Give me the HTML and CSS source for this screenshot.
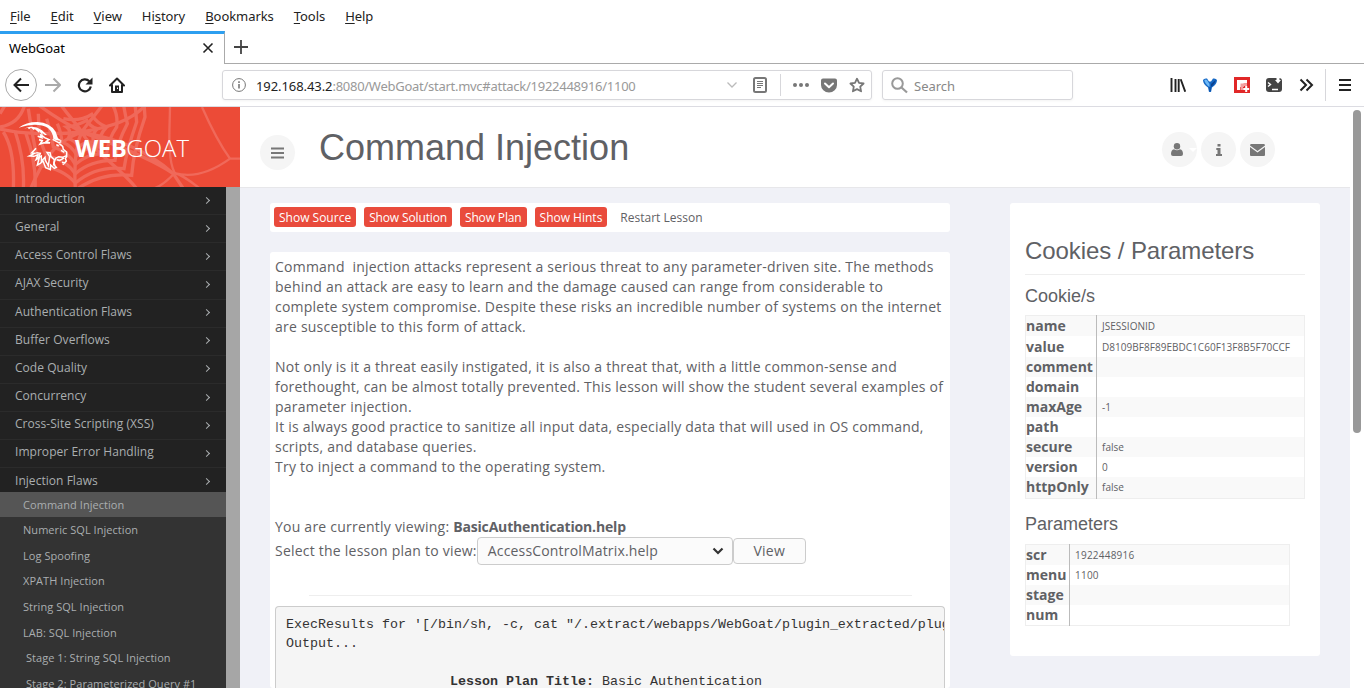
FILE: index.html
```html
<!DOCTYPE html>
<html lang="en">
<head>
    <meta charset="UTF-8">
    <title>WebGoat</title>
    <link rel="stylesheet" href="styles.css">
</head>
<body>
    <div class="browser">
        <div class="menubar">
            <span><u>F</u>ile</span>
            <span><u>E</u>dit</span>
            <span><u>V</u>iew</span>
            <span>Hi<u>s</u>tory</span>
            <span><u>B</u>ookmarks</span>
            <span><u>T</u>ools</span>
            <span><u>H</u>elp</span>
        </div>
        <div class="tabs">
            <div class="tab">
                <span>WebGoat</span>
                <svg width="12" height="12" viewBox="0 0 12 12"><path d="M1.500 1.500l9 9M10.500 1.500l-9 9" stroke="#222" stroke-width="1.600" fill="none"/></svg>
            </div>
            <div class="tab-rest">
                <svg width="14" height="14" viewBox="0 0 14 14"><path d="M7 0v14M0 7h14" stroke="#444" stroke-width="1.800"/></svg>
            </div>
        </div>
        <div class="navbar">
            <div class="back">
                <svg width="16" height="16" viewBox="0 0 16 16"><path d="M8 1.500L1.500 8 8 14.500M2 8h14" stroke="#222" stroke-width="2" fill="none"/></svg>
            </div>
            <div class="nav-icons">
                <svg width="16" height="16" viewBox="0 0 16 16"><path d="M8.500 1.500L15 8l-6.500 6.500M0 8h15" stroke="#aaa" stroke-width="2" fill="none"/></svg>
                <svg width="16" height="16" viewBox="0 0 16 16"><path d="M13.800 9.500A6 6 0 1 1 12.300 4.200" stroke="#222" stroke-width="2.200" fill="none"/><path d="M15.500 0.500v7h-7z" fill="#222"/></svg>
                <svg width="16" height="16" viewBox="0 0 16 16"><path d="M1 8.500L8 1.500l7 7M3 7.500V15h10V7.500" stroke="#222" stroke-width="2" fill="none" stroke-linejoin="round" stroke-linecap="round"/><path d="M6 8.500h4V15H6z" fill="#222"/><path d="M8 10.500h1v1.500H8z" fill="#fff"/></svg>
            </div>
            <div class="urlbar">
                <svg width="14" height="14" viewBox="0 0 14 14"><circle cx="7" cy="7" r="6.400" fill="none" stroke="#777"/><path d="M7 6v4.500M7 3.300v1.700" stroke="#777" stroke-width="1.600"/></svg>
                <span class="url"><b>192.168.43.2</b>:8080/WebGoat/start.mvc#attack/1922448916/1100</span>
                <svg class="drop" width="10" height="6" viewBox="0 0 10 6"><path d="M.5.5L5 5 9.500.5" stroke="#bbb" stroke-width="1.300" fill="none"/></svg>
                <svg class="reader" width="14" height="16" viewBox="0 0 14 16"><rect x="1" y="1" width="12" height="14" rx="1.500" fill="none" stroke="#777" stroke-width="2"/><path d="M4 4.500h6M4 6.500h6M4 8.500h6M4 10.500h4" stroke="#777"/></svg>
                <i class="sep"></i>
                <svg class="dots" width="16" height="4" viewBox="0 0 16 4"><g fill="#777"><circle cx="2" cy="2" r="2"/><circle cx="8" cy="2" r="2"/><circle cx="14" cy="2" r="2"/></g></svg>
                <svg class="pocket" width="16" height="15" viewBox="0 0 16 15"><path d="M2 .5h12A2 2 0 0 1 16 2.500V7A8 7.500 0 0 1 0 7V2.500A2 2 0 0 1 2 .5z" fill="#777"/><path d="M4 5.500l4 3.700 4-3.700" stroke="#fff" stroke-width="2" fill="none" stroke-linecap="round" stroke-linejoin="round"/></svg>
                <svg width="16" height="16" viewBox="0 0 16 16"><path d="M8 1.700l2 4.200 4.600.6-3.400 3.200.9 4.600L8 12.100l-4.100 2.200.9-4.600L1.400 6.500 6 5.900z" fill="none" stroke="#777" stroke-width="1.800" stroke-linejoin="round"/></svg>
            </div>
            <div class="search">
                <svg width="17" height="17" viewBox="0 0 17 17"><circle cx="6.500" cy="6.500" r="5.300" fill="none" stroke="#999" stroke-width="2"/><path d="M10.500 10.500l5.500 5" stroke="#999" stroke-width="2.200"/></svg>
                <span>Search</span>
            </div>
            <div class="tools">
                <svg width="16" height="16" viewBox="0 0 16 16"><path d="M1.500 1v14M5.500 2v13M8.700 2v13M10.700 2.200l4.500 12.500" stroke="#222" stroke-width="1.900"/></svg>
                <svg width="16" height="16" viewBox="0 0 16 16"><path d="M1 3q1-2 4-1.500l2 3h2l2-3q3-.5 4 1.500 0 4-5 7.500L9 15H7l-1-4.500Q1 7 1 3z" fill="#1668c4"/><path d="M2.300 3q1.500-1 2.700 0L7.500 7v3Q3 7 2.300 3z" fill="#6db9f8"/><path d="M13.700 3L9 7v3q4-3 4.700-7zM7.500 10h1v4h-1z" fill="#0b4290"/></svg>
                <svg width="16" height="16" viewBox="0 0 16 16"><path d="M0 0h16v16H0z" fill="#e12828"/><path d="M3 3h10v3.500H9.500V10H6v3H3z" fill="#fff"/><path d="M6.500 6.500H13V9H9.500v1H9v3H6.500z" fill="#f3a0a0"/><path d="M12.200 9v6M9.200 12h6" stroke="#fff" stroke-width="2"/></svg>
                <svg width="16" height="16" viewBox="0 0 16 16"><path d="M3 1h10a3 3 0 0 1 3 3v8a3 3 0 0 1-3 3H3a3 3 0 0 1-3-3V4a3 3 0 0 1 3-3z" fill="#444"/><path d="M2 5.500l2.500 2L2 9.500M6 12.500h6" stroke="#fff" stroke-width="1.400" fill="none"/><path d="M10.500 0h3v3H15l-3 3.500L9 3h1.500z" fill="#fff"/></svg>
                <svg width="16" height="16" viewBox="0 0 16 16"><path d="M2.500 2.500L8 8l-5.500 5.500M8.500 2.500L14 8l-5.500 5.500" stroke="#222" stroke-width="2" fill="none"/></svg>
                <i class="sep"></i>
                <svg width="12" height="16" viewBox="0 0 12 16"><path d="M0 3h12M0 8h12M0 13h12" stroke="#222" stroke-width="2"/></svg>
            </div>
        </div>
    </div>

    <div class="page">
        <aside class="sidebar">
            <div class="brand">
                <svg class="web" width="240" height="80" viewBox="0 0 720 240" fill="none">
                    <!-- cobweb -->
                    <g stroke="#f0695a" stroke-width="10">
                        <path d="M245 75C180 40 150 20 110-10M245 75C160 85 60 80 0 66M245 75C150 110 120 180 92 245M245 75C225 120 222 180 226 245M245 75C275 130 360 180 410 245M245 75C310 100 450 150 520 200L550 245M245 75C330 60 400 40 440-10M245 75C230 50 200 20 180-10M245 75C270 40 290 20 310-10M245 75C340 95 430 120 520 200"/>
                        <path d="M510-5C510 60 500 150 524 198Q600 220 690 155M606 0Q650 100 690 155H725M524 198Q490 235 460 245M524 198Q550 205 600 245" stroke-width="7"/>
                        <path d="M200 60Q215 70 205 95Q225 100 235 120Q255 102 280 105Q275 82 292 65Q270 60 260 40Q235 55 200 60z"/>
                        <path d="M172 50Q185 80 185 105Q215 115 230 145Q255 120 295 120Q295 85 320 60Q290 50 275 22Q240 45 190 35"/>
                        <path d="M140 35Q155 85 160 120Q205 135 226 172Q265 137 320 140Q325 95 350 60Q355 20 335-10"/>
                        <path d="M115 20Q115 95 138 145Q200 160 226 200Q270 160 345 160Q350 110 382 50Q375 20 370-10"/>
                        <path d="M85 5Q100 110 118 175Q190 185 226 228Q290 175 372 185Q380 130 410 45L405-10"/>
                        <path d="M45 72Q75 160 70 245M10 75Q45 130 40 245M78 80Q110 170 105 245M0 60Q60 50 75-10M0 20L15-5M226 250Q300 195 395 205Q400 130 435 30L432-10"/>
                    </g>
                    <!-- goat head -->
                    <g fill="#fff">
                        <path d="M56 62Q78 45 112 45Q150 47 167 74Q171 86 174 94L186 101Q170 103 160 96Q160 78 144 63Q112 44 56 62z"/>
                        <path d="M72 65Q100 52 126 70L141 84 135 84 127 78 128 85 117 72 118 78 104 66 102 70 93 62 87 67 83 62z"/>
                    </g>
                    <g stroke="#fff" stroke-width="4.500" stroke-linejoin="miter">
                        <path d="M113 88L126 92 121 82 134 92 147 98 139 103 150 108 132 107 120 111 127 101 117 98"/>
                        <path d="M158 97L176 107 184 104M178 110L188 118 190 127 200 135 200 149 196 154 199 162 194 168 186 166M183 130L193 136M169 113L176 117M199 146L188 151 176 149 167 154 162 168 165 176M192 153L179 160 170 158M196 166L188 173"/>
                        <path d="M108 124L95 138 104 139 88 147 102 148 114 143 108 158 118 152 112 174 121 169 129 162 137 182 151 188 152 174 163 184 169 181 161 173 163 158 153 149 150 137 141 136 149 149 145 176 136 160 135 151 124 163 124 147 116 151 121 139 109 137"/>
                    </g>
                </svg>
                <div class="logo"><b>WEB</b>GOAT</div>
            </div>
            <div class="side-body">
                <ul class="menu">
                    <li>Introduction<i></i></li>
                    <li>General<i></i></li>
                    <li>Access Control Flaws<i></i></li>
                    <li>AJAX Security<i></i></li>
                    <li>Authentication Flaws<i></i></li>
                    <li>Buffer Overflows<i></i></li>
                    <li>Code Quality<i></i></li>
                    <li>Concurrency<i></i></li>
                    <li>Cross-Site Scripting (XSS)<i></i></li>
                    <li>Improper Error Handling<i></i></li>
                    <li class="open">Injection Flaws<i></i></li>
                </ul>
                <ul class="submenu">
                    <li class="active">Command Injection</li>
                    <li>Numeric SQL Injection</li>
                    <li>Log Spoofing</li>
                    <li>XPATH Injection</li>
                    <li>String SQL Injection</li>
                    <li>LAB: SQL Injection</li>
                    <li class="stage">Stage 1: String SQL Injection</li>
                    <li class="stage">Stage 2: Parameterized Query #1</li>
                </ul>
            </div>
        </aside>

        <main class="main">
            <header class="header">
                <div class="circle toggle">
                    <svg width="13" height="12" viewBox="0 0 13 12"><path d="M0 1.500h13M0 6h13M0 10.500h13" stroke="#777" stroke-width="2"/></svg>
                </div>
                <h1>Command Injection</h1>
                <div class="actions">
                    <div class="circle user">
                        <svg width="12" height="13" viewBox="0 0 12 13"><path d="M3 6.200Q6 8.500 9 6.200 12 7 12 11 12 13 10 13H2Q0 13 0 11 0 7 3 6.200z" fill="#777"/><circle cx="6" cy="3.300" r="3.200" fill="#777"/></svg>
                        <em></em>
                    </div>
                    <div class="circle">
                        <svg width="6" height="12" viewBox="0 0 6 12"><path d="M1.500 0h3v2.500h-3zM.3 4h4.200v6H6v2H0v-2h1.500V6H.3z" fill="#777"/></svg>
                    </div>
                    <div class="circle">
                        <svg width="15" height="12" viewBox="0 0 15 12"><path d="M1 0h13q1 0 1 1.500L7.500 7 0 1.500Q0 0 1 0zM0 3l7.500 5.500L15 3v8q0 1-1 1H1q-1 0-1-1z" fill="#777"/></svg>
                    </div>
                </div>
            </header>

            <div class="content">
                <section class="lesson">
                    <div class="panel buttons">
                        <a class="btn">Show Source</a>
                        <a class="btn tight">Show Solution</a>
                        <a class="btn tight">Show Plan</a>
                        <a class="btn">Show Hints</a>
                        <a class="restart">Restart Lesson</a>
                    </div>
                    <div class="panel lesson-text">
                        <p>Command&nbsp; injection attacks represent a serious threat to any parameter-driven site. The methods<br>behind an attack are easy to learn and the damage caused can range from considerable to<br>complete system compromise. Despite these risks an incredible number of systems on the internet<br>are susceptible to this form of attack.<br><br>Not only is it a threat easily instigated, it is also a threat that, with a little common-sense and<br>forethought, can be almost totally prevented. This lesson will show the student several examples of<br>parameter injection.<br>It is always good practice to sanitize all input data, especially data that will used in OS command,<br>scripts, and database queries.<br>Try to inject a command to the operating system.<br><br><br>You are currently viewing: <b>BasicAuthentication.help</b></p>
                        <div class="plan">
                            <span>Select the lesson plan to view:</span>
                            <div class="select">AccessControlMatrix.help
                                <svg width="12" height="8" viewBox="0 0 12 8"><path d="M1.500 1.500L6 6l4.500-4.500" stroke="#333" stroke-width="2.200" fill="none"/></svg>
                            </div>
                            <div class="view">View</div>
                        </div>
                        <hr>
                        <div class="output">
                            <pre>ExecResults for '[/bin/sh, -c, cat "/.extract/webapps/WebGoat/plugin_extracted/plugin</pre>
                            <pre>Output...</pre>
                            <pre class="plan-title"><b>Lesson Plan Title:</b> Basic Authentication</pre>
                        </div>
                    </div>
                </section>

                <section class="panel cookies">
                    <h2>Cookies / Parameters</h2>
                    <h3>Cookie/s</h3>
                    <table class="cookie-table">
                        <tr><th>name</th><td>JSESSIONID</td></tr>
                        <tr class="tall"><th>value</th><td>D8109BF8F89EBDC1C60F13F8B5F70CCF</td></tr>
                        <tr><th>comment</th><td></td></tr>
                        <tr><th>domain</th><td></td></tr>
                        <tr><th>maxAge</th><td>-1</td></tr>
                        <tr><th>path</th><td></td></tr>
                        <tr><th>secure</th><td>false</td></tr>
                        <tr><th>version</th><td>0</td></tr>
                        <tr class="tall"><th>httpOnly</th><td>false</td></tr>
                    </table>
                    <h3 class="params">Parameters</h3>
                    <table class="param-table">
                        <tr><th>scr</th><td>1922448916</td></tr>
                        <tr><th>menu</th><td>1100</td></tr>
                        <tr><th>stage</th><td></td></tr>
                        <tr><th>num</th><td></td></tr>
                    </table>
                </section>
            </div>
        </main>
        <div class="scroll"><div class="thumb"></div></div>
    </div>
</body>
</html>
```

FILE: styles.css
```css
* {
    box-sizing: border-box;
}
body {
    margin: 0;
    height: 688px;
    overflow: hidden;
    background: #fff;
    font-family: "Open Sans", sans-serif;
    font-size: 14px;
    line-height: 20px;
    color: #5f6165;
}
svg {
    display: block;
    flex: none;
}
ul, p, h1, h2, h3 {
    margin: 0;
    padding: 0;
    list-style: none;
    font-weight: normal;
}

/* browser window */
.browser {
    height: 107px;
    font-family: "Noto Sans", sans-serif;
    font-size: 13px;
    color: #222;
    border-bottom: 1px solid #dcdce2;
}
.menubar {
    height: 31px;
    display: flex;
    gap: 20px;
    padding: 6px 10px 0;
    line-height: 20px;
    letter-spacing: -0.060px;
}
.menubar u {
    text-underline-offset: 2px;
}
.tabs {
    display: flex;
    height: 33px;
}
.tab {
    width: 225px;
    display: flex;
    justify-content: space-between;
    align-items: center;
    padding: 0 10px 2px 9px;
    border-top: 3px solid #2d9ff0;
    border-right: 1px solid #aaa;
    color: #000;
    letter-spacing: -0.100px;
}
.tab-rest {
    flex: 1;
    padding: 9px;
    border-bottom: 1px solid #aaa;
}
.navbar {
    height: 42px;
    display: flex;
    align-items: center;
    padding-left: 5px;
}
.back {
    width: 32px;
    height: 32px;
    border: 1px solid #aaa;
    border-radius: 50%;
    display: flex;
    align-items: center;
    justify-content: center;
}
.nav-icons {
    display: flex;
    gap: 16px;
    margin-left: 8px;
    width: 177px;
}
.urlbar, .search {
    height: 30px;
    display: flex;
    align-items: center;
    border: 1px solid #d7d7db;
    border-radius: 3px;
    box-shadow: 0 1px 3px rgba(0,0,0,0.05);
}
.urlbar {
    width: 650px;
    padding: 0 6px 0 9px;
}
.url {
    margin-left: 10px;
    padding-top: 2px;
    flex: 1;
    color: #999;
    letter-spacing: -0.270px;
}
.url b {
    font-weight: normal;
    color: #222;
    letter-spacing: -0.080px;
}
.drop {
    margin-right: 16px;
}
.sep {
    width: 1px;
    height: 22px;
    background: #d7d7db;
}
.reader {
    margin-right: 13px;
}
.dots {
    margin: 0 12px;
}
.pocket {
    margin-right: 12px;
}
.search {
    width: 191px;
    margin-left: 10px;
    padding-left: 8px;
    gap: 6px;
    color: #888;
}
.search span {
    padding-top: 2px;
}
.tools {
    display: flex;
    align-items: center;
    gap: 16px;
    margin-left: 97px;
}
.tools .sep {
    height: 32px;
    margin: 0 -3px 0 -5px;
}

/* WebGoat */
.page {
    display: flex;
    height: 581px;
}
.sidebar {
    width: 240px;
}
.brand {
    position: relative;
    height: 80px;
    background: #ec4b37;
    overflow: hidden;
}
.web {
    position: absolute;
    left: 0;
    top: 0;
}
.logo {
    position: relative;
    padding: 24px 0 0 75px;
    font-size: 24px;
    line-height: 34px;
    font-weight: 300;
    color: #fff;
}
.logo b {
    font-weight: 700;
    letter-spacing: -0.500px;
}
.side-body {
    height: 501px;
    overflow: hidden;
    background: #222;
    border-right: 14px solid #a6a6a6;
}
.menu li {
    height: 28.150px;
    display: flex;
    justify-content: space-between;
    align-items: center;
    padding: 0 17px 3px 15px;
    border-bottom: 1px solid #2b2b2b;
    font-size: 12px;
    letter-spacing: 0.040px;
    color: #aaaeb0;
}
.menu li.open {
    height: 23.500px;
    padding-bottom: 0;
    padding-top: 1px;
    border: 0;
}
.menu i {
    width: 5px;
    height: 5px;
    margin-top: 2px;
    border: solid #aaaeb0;
    border-width: 1px 1px 0 0;
    transform: rotate(45deg);
}
.submenu {
    height: 220px;
    background: #333;
    font-size: 11px;
    letter-spacing: 0.050px;
    color: #aaaeb0;
}
.submenu li {
    height: 25.670px;
    line-height: 26px;
    padding-left: 23px;
    white-space: nowrap;
}
.submenu .active {
    height: 25px;
    background: #555;
}
.submenu .stage {
    padding-left: 26px;
}

.main {
    width: 1110px;
    background: #f0f1f7;
}
.header {
    height: 81px;
    display: flex;
    padding-left: 20px;
    background: #fff;
    border-bottom: 1px solid #e7e7ea;
}
.circle {
    width: 35px;
    height: 35px;
    border-radius: 50%;
    background: #f5f5f5;
    display: flex;
    align-items: center;
    justify-content: center;
}
.toggle {
    margin-top: 28px;
}
.header h1 {
    margin: 20px 0 0 24px;
    width: 843px;
    font-family: "Liberation Sans", sans-serif;
    font-size: 36px;
    line-height: 41px;
}
.actions {
    display: flex;
    gap: 4px;
    padding-top: 25px;
}
.user {
    padding-left: 4px;
    gap: 6px;
}
.user em {
    border: 4px solid transparent;
    border-top-color: #fff;
    border-bottom: 0;
    margin-right: -4px;
}
.content {
    display: flex;
    align-items: flex-start;
    gap: 60px;
    padding: 15px 30px 0;
}
.panel {
    background: #fff;
    border-radius: 3px;
}
.lesson {
    width: 680px;
}
.buttons {
    display: flex;
    height: 29px;
    gap: 8px;
    padding: 4px;
    margin-bottom: 20px;
    font-size: 12px;
    line-height: 22px;
}
.btn {
    height: 20px;
    padding: 0 5px;
    background: #e94b3c;
    color: #fff;
    border-radius: 3px;
}
.tight {
    letter-spacing: -0.140px;
}
.restart {
    padding-left: 5px;
}
.lesson-text {
    height: 436px;
    padding: 5px 5px 0;
    white-space: nowrap;
    letter-spacing: 0.225px;
}
.lesson-text p b {
    letter-spacing: -0.170px;
}
.plan {
    display: flex;
    align-items: center;
    height: 28px;
}
.select, .view {
    height: 28px;
    border: 1px solid #ccc;
    border-radius: 4px;
    background: #fbfbfb;
    line-height: 26px;
}
.select {
    width: 256px;
    padding: 0 8px 0 10px;
    display: flex;
    align-items: center;
    justify-content: space-between;
    letter-spacing: 0.170px;
}
.view {
    width: 73px;
    height: 26px;
    line-height: 24px;
    text-align: center;
}
hr {
    width: 603px;
    margin: 30px auto 10px;
    border: 0;
    border-top: 1px solid #eee;
}
.output {
    height: 82px;
    padding: 8px 10px;
    overflow: hidden;
    background: #f5f5f5;
    border: 1px solid #ccc;
    border-bottom: 0;
    border-radius: 4px 4px 0 0;
}
pre {
    margin: 0;
    font-family: "Liberation Mono", monospace;
    font-size: 13.333px;
    line-height: 19px;
    letter-spacing: 0;
    color: #333;
}
.plan-title {
    padding: 19px 0 0 164px;
}
.cookies {
    width: 310px;
    height: 453px;
    padding: 30px 15px 0;
}
.cookies h2, .cookies h3 {
    font-family: "Liberation Sans", sans-serif;
}
.cookies h2 {
    height: 42px;
    font-size: 24px;
    line-height: 36px;
    letter-spacing: -0.080px;
    border-bottom: 1px solid #eee;
    white-space: nowrap;
}
.cookies h3 {
    font-size: 18px;
    line-height: 20px;
    margin: 11px 0 9px;
}
.cookies h3.params {
    margin: 15px 0 10px;
}
table {
    border-collapse: collapse;
    border: 1px solid #eee;
    width: 280px;
}
.param-table {
    width: 265px;
}
tr {
    height: 20px;
}
.tall {
    height: 21px;
}
tr:nth-child(odd) {
    background: #f9f9f9;
}
th {
    width: 71px;
    padding: 0;
    text-align: left;
    line-height: 20px;
    border-right: 1px solid #bbb;
}
.param-table th {
    width: 44px;
}
td {
    padding: 0 0 0 5px;
    font-size: 10px;
    line-height: 18px;
    letter-spacing: 0.030px;
}
.param-table td {
    letter-spacing: 0.220px;
}
.scroll {
    width: 14px;
    padding: 3px;
}
.thumb {
    width: 8px;
    height: 323px;
    border-radius: 4px;
    background: #999;
}
```
